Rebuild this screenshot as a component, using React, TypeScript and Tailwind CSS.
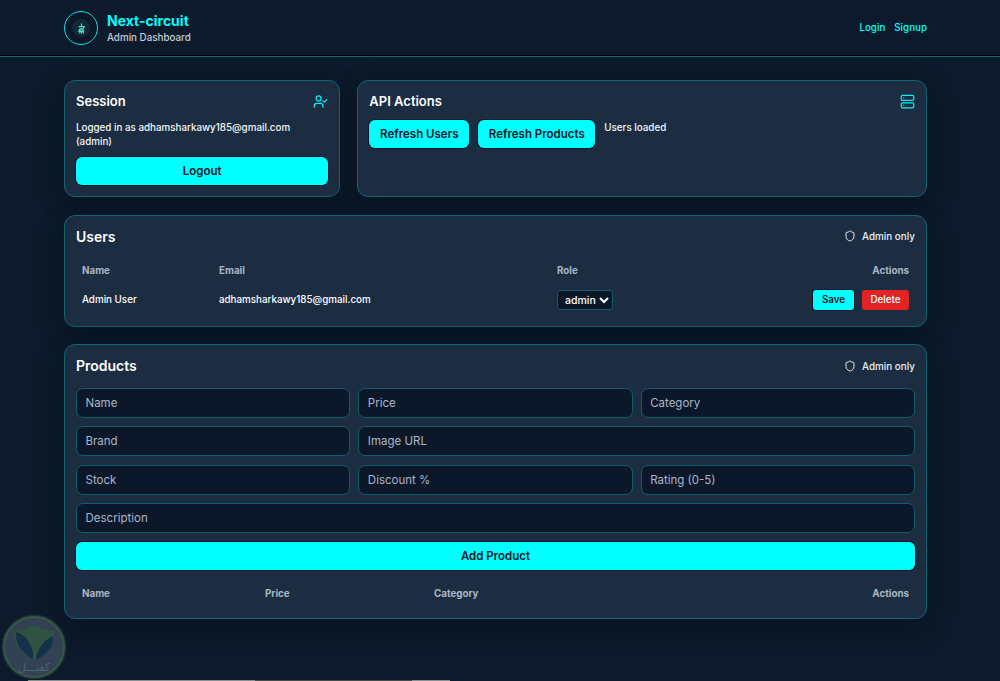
import { Server, Shield, UserCheck } from "lucide-react";

const inputClass =
  "h-[30px] min-w-0 rounded-[7px] border border-[#0e5f6c] bg-[#0c1829] pr-[9px] pl-[8.5px] text-[11.5px] text-white outline-none placeholder:text-[#aab7c6]";

const cardClass =
  "rounded-[11px] border border-[#0f6673] bg-[#1c2d41] shadow-[0_8px_24px_rgba(5,10,20,0.45)]";

const btnClass =
  "bg-[#00ffff] font-semibold text-[#0c1829] shadow-[0_0_0_1px_#0c1829]";

function AdminOnly() {
  return (
    <div className="flex items-center gap-[6px] text-[9.9px] font-medium text-[#e6edf5]">
      <Shield size={12} strokeWidth={2} />
      <span>Admin only</span>
    </div>
  );
}

function Watermark() {
  return (
    <div className="absolute bottom-[1px] left-[1px] h-[66px] w-[66px]">
      <svg viewBox="0 0 66 66" className="h-full w-full">
        <circle cx="33" cy="33" r="32.5" fill="#1a3040" />
        <circle cx="33" cy="33" r="30" fill="#324254" stroke="#36593f" strokeWidth="2" />
        <path d="M13 17 Q24 16 33 11 Q42 16 53 17 Q54 35 33 47 Q12 35 13 17Z" fill="#2f5340" />
        <path d="M15 18 C26 21 33 33 32 46 C21 38 14 31 15 18Z" fill="#14304a" />
        <path d="M52 22 C53 33 45 41 35 46 C36 36 41 27 52 22Z" fill="#14304a" />
        <text
          x="33"
          y="57"
          textAnchor="middle"
          fontSize="11"
          fill="#4f6070"
          style={{ fontFamily: '"DejaVu Sans", sans-serif' }}
        >
          كفيـــل
        </text>
      </svg>
    </div>
  );
}

export default function App() {
  return (
    <div className="relative h-[681px] overflow-hidden bg-[#0d1a2b] font-['Inter',sans-serif] text-white">
      <header className="flex h-[57px] items-center justify-between border-b border-[#0c6b78] pr-[73px] pl-[64px] shadow-[0_-1px_0_#000_inset]">
        <div className="flex items-center gap-[9px]">
          <div className="flex h-[34px] w-[34px] items-center justify-center rounded-full border border-[#00e5e5] bg-[#0c1829]">
            <div className="flex h-[18px] w-[18px] items-center justify-center rounded-full bg-[#12293a]">
              <svg viewBox="0 0 10 12" className="h-[11px] w-[9px]" fill="none" stroke="#5ee0c4" strokeWidth="1.3">
                <path d="M5 0.5 L5 3 M2 4 H8 L6.5 6.5 H3.5 L2 9 H8 M3.5 6.5 L3 11.5 M6.5 6.5 L7 11.5 M5 9 V11.5" />
              </svg>
            </div>
          </div>
          <div className="flex flex-col">
            <span className="text-[14px] leading-[18px] font-bold text-[#00ffff]">Next-circuit</span>
            <span className="text-[9.8px] leading-[15px] font-medium text-[#c3ced9]">Admin Dashboard</span>
          </div>
        </div>
        <nav className="flex gap-[9px] text-[9.8px] font-medium text-[#00ffff]">
          <a>Login</a>
          <a>Signup</a>
        </nav>
      </header>

      <main className="ml-[64px] flex w-[863px] flex-col gap-[17.5px] pt-[23px]">
        <div className="grid grid-cols-3 gap-[17px]">
          <section className={`${cardClass} flex h-[117px] flex-col px-[11px] pt-[11px]`}>
            <div className="flex items-center justify-between">
              <h2 className="text-[13px] leading-[18px] font-semibold">Session</h2>
              <UserCheck size={15} strokeWidth={2} className="text-[#00f0f0]" />
            </div>
            <p className="mt-[11px] text-[9.8px] leading-[14px] font-medium text-[#f3f6f9]">
              Logged in as adhamsharkawy185@gmail.com (admin)
            </p>
            <button className={`${btnClass} mt-[8px] h-[28px] w-full rounded-[6px] pt-[2px] text-[11.5px]`}>Logout</button>
          </section>

          <section className={`${cardClass} col-span-2 h-[117px] px-[11px] pt-[11px]`}>
            <div className="flex items-center justify-between">
              <h2 className="text-[13px] leading-[18px] font-semibold">API Actions</h2>
              <Server size={15} strokeWidth={2} className="text-[#00f0f0]" />
            </div>
            <div className="mt-[10px] flex items-start gap-[9px]">
              <button className={`${btnClass} h-[28px] w-[100px] rounded-[6px] pt-[2px] text-[11.5px]`}>Refresh Users</button>
              <button className={`${btnClass} h-[28px] w-[117px] rounded-[6px] pt-[2px] text-[11.5px]`}>Refresh Products</button>
              <span className="pt-[1px] text-[9.8px] leading-[14px] font-medium text-[#f3f6f9]">Users loaded</span>
            </div>
          </section>
        </div>

        <section className={`${cardClass} h-[112px] px-[11px] pt-[12px]`}>
          <div className="flex items-center justify-between">
            <h2 className="text-[14px] leading-[18px] font-semibold">Users</h2>
            <AdminOnly />
          </div>
          <table className="mt-[13px] w-full table-fixed text-left text-[9.8px]">
            <thead className="text-[#a9b6c5]">
              <tr className="h-[26px]">
                <th className="w-[143px] pl-[6px] font-bold">Name</th>
                <th className="w-[338px] font-bold">Email</th>
                <th className="font-bold">Role</th>
                <th className="w-[120px] pr-[6px] text-right font-bold">Actions</th>
              </tr>
            </thead>
            <tbody>
              <tr className="h-[31px] font-medium">
                <td className="pl-[6px]">Admin User</td>
                <td>adhamsharkawy185@gmail.com</td>
                <td>
                  <select className="h-[20px] w-[56px] rounded-[3px] border border-[#0e5f6c] bg-[#0c1829] pl-[3px] text-[10.5px] text-white">
                    <option>admin</option>
                  </select>
                </td>
                <td className="pr-[6px]">
                  <div className="flex justify-end gap-[8px]">
                    <button className={`${btnClass} h-[20px] w-[41px] rounded-[3px] text-[9.8px] font-medium`}>Save</button>
                    <button className="h-[20px] w-[47px] rounded-[3px] bg-[#e02424] text-[9.8px] font-medium text-white">
                      Delete
                    </button>
                  </div>
                </td>
              </tr>
            </tbody>
          </table>
        </section>

        <section className={`${cardClass} h-[274.5px] px-[11px] pt-[12px]`}>
          <div className="flex items-center justify-between">
            <h2 className="text-[14px] leading-[18px] font-semibold">Products</h2>
            <AdminOnly />
          </div>
          <div className="mt-[13px] grid grid-cols-3 gap-x-[8px] gap-y-[8.4px]">
            <input className={inputClass} placeholder="Name" />
            <input className={inputClass} placeholder="Price" />
            <input className={inputClass} placeholder="Category" />
            <input className={inputClass} placeholder="Brand" />
            <input className={`${inputClass} col-span-2`} placeholder="Image URL" />
            <input className={inputClass} placeholder="Stock" />
            <input className={inputClass} placeholder="Discount %" />
            <input className={inputClass} placeholder="Rating (0-5)" />
            <input className={`${inputClass} col-span-3`} placeholder="Description" />
          </div>
          <button className={`${btnClass} mt-[9px] h-[28px] w-full rounded-[6px] text-[11.5px]`}>Add Product</button>
          <table className="mt-[10px] w-full table-fixed text-left text-[9.8px] text-[#a9b6c5]">
            <thead>
              <tr className="h-[28px]">
                <th className="w-[189px] pl-[6px] font-bold">Name</th>
                <th className="w-[169px] font-bold">Price</th>
                <th className="font-bold">Category</th>
                <th className="w-[120px] pr-[6px] text-right font-bold">Actions</th>
              </tr>
            </thead>
          </table>
        </section>
      </main>

      <Watermark />
      {/* window edge at the very bottom of the capture */}
      <div className="absolute bottom-0 left-[28px] flex h-[1px]">
        <div className="w-[227px] bg-[#8d8d8d]" />
        <div className="w-[157px] bg-[#4a4a48]" />
        <div className="w-[38px] bg-[#8d8d8d]" />
      </div>
    </div>
  );
}
